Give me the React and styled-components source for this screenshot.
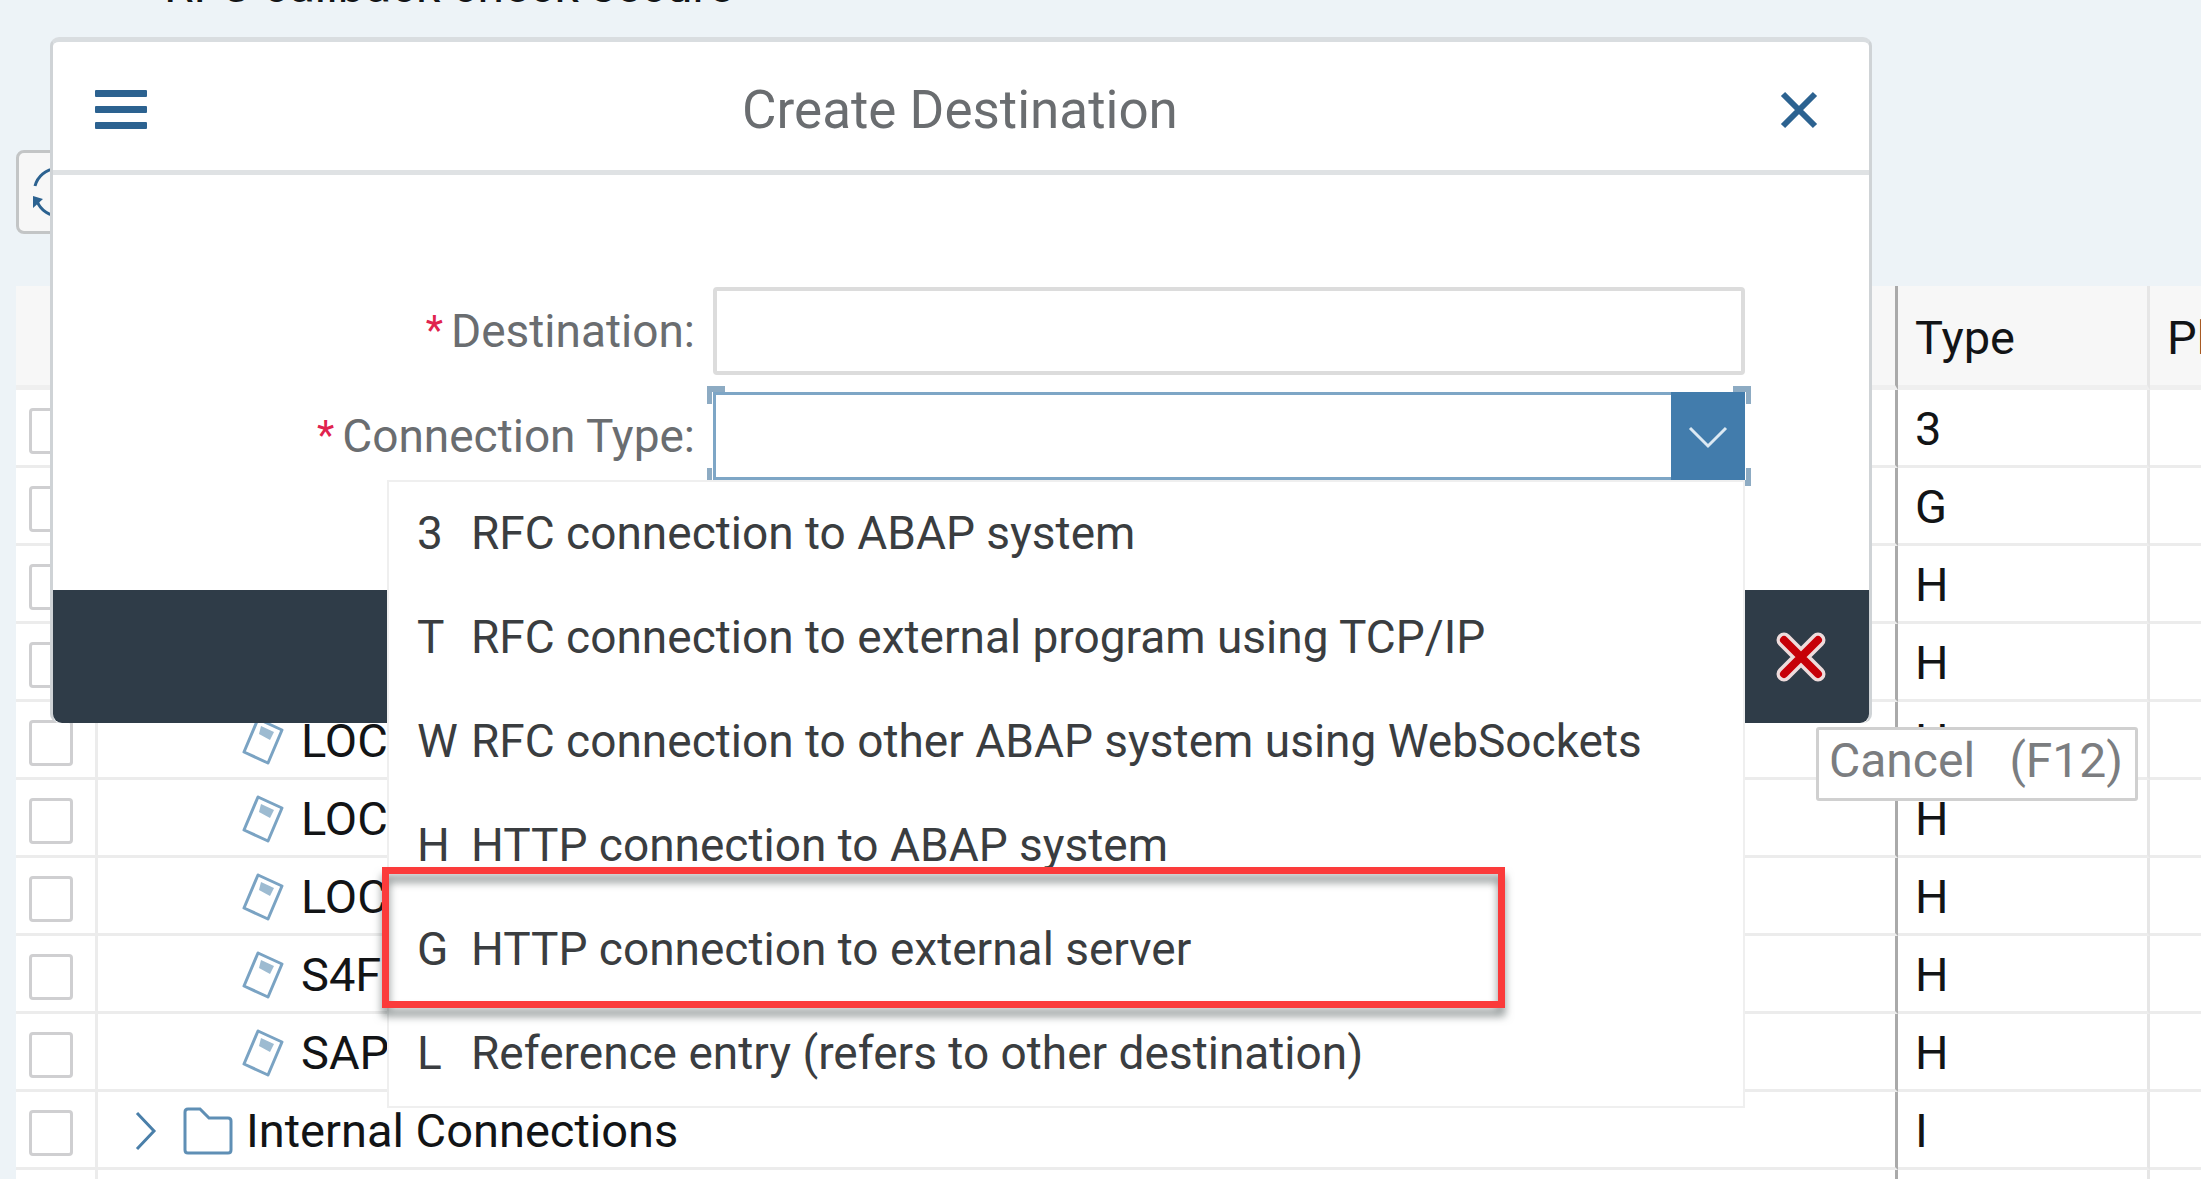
import React from "react";
import styled, { createGlobalStyle, css } from "styled-components";

const color = {
  page: "#edf3f7",
  line: "#ececec",
  header: "#f7f7f7",
  ink: "#121416",
  item: "#3a3d40",
  label: "#6a6d70",
  icon: "#2c6290",
  accent: "#427cac",
  bar: "#2f3c48",
};

const GlobalStyle = createGlobalStyle`
  *, *::before, *::after { box-sizing: border-box; }
  body { margin: 0; background: ${color.page}; }
  body, button, input, select {
    font-family: Roboto, "Liberation Sans", sans-serif;
    font-size: 46px;
    line-height: 56px;
    color: ${color.ink};
  }
`;

const Page = styled.div`
  position: relative;
  display: flex;
  flex-direction: column;
  height: 100vh;
  overflow: hidden;
  padding-left: 16px;
`;

const Status = styled.p`
  flex: none;
  margin: -42px 0 0;
  padding-left: 148px;
  font-size: 48px;
`;

const Toolbar = styled.div`
  flex: none;
  display: flex;
  padding: 136px 0 50px;
`;

const ToolButton = styled.button`
  display: flex;
  align-items: center;
  width: 88px;
  height: 84px;
  padding: 0 12px;
  margin-bottom: 2px;
  background: ${color.header};
  border: 3px solid #c3c5c6;
  border-radius: 8px;
`;

const Grid = styled.table`
  flex: none;
  width: 100%;
  table-layout: fixed;
  border-collapse: separate;
  border-spacing: 0;
  font-size: 47px;
  background: #fff;
`;

const HeadCell = styled.th`
  height: 104px;
  padding: 4px 17px 0;
  text-align: left;
  font-weight: 400;
  white-space: nowrap;
  background: ${color.header};
  border-bottom: 5px solid #efefef;
  border-right: ${(p) => (p.$edge ? `3px solid ${p.$edge}` : "0")};
`;

const Cell = styled.td`
  height: 78px;
  padding: 3px 17px 0;
  white-space: nowrap;
  border-bottom: 3px solid ${color.line};
  border-right: ${(p) => (p.$edge ? `3px solid ${p.$edge}` : "0")};
`;

const Tick = styled.input`
  display: block;
  appearance: none;
  width: 44px;
  height: 46px;
  margin: 4px 0 0 -4px;
  background: #fff;
  border: 3px solid #cfcfd1;
  border-radius: 4px;
`;

const Node = styled.div`
  display: flex;
  align-items: center;
  padding-left: ${(p) => (p.$leaf ? 126 : 20)}px;
  gap: ${(p) => (p.$leaf ? 16 : 13)}px;

  svg { flex: none; }
`;

const NodeIcons = styled.span`
  display: flex;
  align-items: center;
  gap: 26px;
`;

const Dialog = styled.section`
  position: absolute;
  top: 37px;
  left: 50px;
  right: 329px;
  display: flex;
  flex-direction: column;
  background: #fff;
  border: 3px solid #cfd3d6;
  border-top: 5px solid #d9dde0;
  border-bottom: 0;
  border-radius: 9px;
`;

const TitleBar = styled.header`
  display: flex;
  align-items: center;
  justify-content: space-between;
  height: 133px;
  padding: 8px 42px 0 40px;
  border-bottom: 5px solid #dfe2e4;
`;

const Title = styled.h1`
  margin: 0;
  font-size: 53px;
  font-weight: 400;
  color: ${color.label};
`;

const PlainButton = styled.button`
  display: flex;
  align-items: center;
  justify-content: center;
  width: 56px;
  height: 64px;
  padding: 0;
  background: none;
  border: 0;
`;

const Form = styled.form`
  display: grid;
  grid-template-columns: 642px 1fr;
  column-gap: 18px;
  row-gap: 17px;
  padding: 112px 124px 110px 0;
`;

const Label = styled.label`
  display: flex;
  align-items: center;
  justify-content: flex-end;
  gap: 8px;
  color: ${color.label};
`;

const Required = styled.span`
  font-size: 40px;
  color: #e0234e;
`;

const box = css`
  display: block;
  width: 100%;
  height: 88px;
  padding: 0 16px;
  background: #fff;
`;

const TextBox = styled.input`
  ${box}
  border: 4px solid #dcdcdc;
  border-radius: 4px;
`;

const SelectWrap = styled.div`
  position: relative;
`;

const SelectBox = styled.select`
  ${box}
  appearance: none;
  border: 3px solid #7ea6c6;
  border-radius: 0;
`;

const Arrow = styled.span`
  position: absolute;
  top: 0;
  right: 0;
  bottom: 0;
  display: flex;
  align-items: center;
  justify-content: center;
  width: 74px;
  padding-top: 4px;
  background: ${color.accent};
  pointer-events: none;
`;

const Corner = styled.span`
  position: absolute;
  width: 18px;
  height: 18px;
  border: 0 solid #8dabc3;
  ${(p) => p.$v}: -6px;
  ${(p) => p.$h}: -6px;
  border-${(p) => p.$v}-width: 6px;
  border-${(p) => p.$h}-width: 5px;
`;

const Footer = styled.footer`
  display: flex;
  align-items: center;
  justify-content: flex-end;
  height: 133px;
  padding: 0 40px;
  background: ${color.bar};
  border-radius: 0 0 9px 9px;
`;

const Menu = styled.ul`
  position: absolute;
  top: 480px;
  left: 387px;
  right: 456px;
  margin: 0;
  padding: 0;
  list-style: none;
  background: #fff;
  border: 2px solid #efefef;
`;

const MenuItem = styled.li`
  display: grid;
  grid-template-columns: 54px 1fr;
  align-items: center;
  height: 104px;
  padding: 0 0 2px 28px;
  color: ${color.item};
  white-space: nowrap;
`;

const Highlight = styled.div`
  position: absolute;
  top: 867px;
  left: 382px;
  width: 1123px;
  height: 141px;
  border: 7px solid #fb3b3b;
  filter: drop-shadow(0 8px 4px rgba(40, 52, 52, 0.55));
  pointer-events: none;
`;

const Tooltip = styled.div`
  position: absolute;
  top: 727px;
  right: 63px;
  display: flex;
  justify-content: space-between;
  width: 322px;
  padding: 3px 12px 9px 10px;
  font-size: 48px;
  color: #7b7d80;
  background: #fff;
  border: 3px solid #d0d0d0;
  border-radius: 3px;
`;

const DocIcon = () => (
  <svg width="44" height="50" viewBox="0 0 44 50" fill="none" stroke="#7aa3c3" strokeWidth="3">
    <path d="M17 3 41 14 27 47 3 36Z" strokeLinejoin="round" />
    <path d="M20 10 33 16 29 24 18 18Z" fill="#9dbbd1" stroke="none" />
  </svg>
);

const FolderIcon = () => (
  <svg width="50" height="48" viewBox="0 0 50 48" fill="none" stroke="#5f8fb5" strokeWidth="3">
    <path d="M2 5Q2 2 5 2H17L26 11H45Q48 11 48 14V43Q48 46 45 46H5Q2 46 2 43Z" />
  </svg>
);

const ChevronRight = () => (
  <svg width="22" height="40" viewBox="0 0 22 40" fill="none" stroke="#4a7fa9" strokeWidth="3">
    <path d="M2 2 19 20 2 38" />
  </svg>
);

const RefreshIcon = () => (
  <svg width="54" height="54" viewBox="0 0 54 54" fill="none" stroke={color.icon} strokeWidth="3">
    <path d="M4 21A23 23 0 0 1 48 19 M50 33A23 23 0 0 1 6 36" />
    <path d="M2 31V43L12 34Z M52 23V11L42 20Z" fill={color.icon} stroke="none" />
  </svg>
);

const MenuIcon = () => (
  <svg width="52" height="40" viewBox="0 0 52 40" fill={color.icon}>
    <rect width="52" height="7" rx="1" y="0" />
    <rect width="52" height="7" rx="1" y="16" />
    <rect width="52" height="7" rx="1" y="32" />
  </svg>
);

const CloseIcon = () => (
  <svg width="38" height="38" viewBox="0 0 38 38" fill="none" stroke={color.icon} strokeWidth="6">
    <path d="M3 3 35 35M35 3 3 35" />
  </svg>
);

const CancelIcon = () => (
  <svg width="50" height="50" viewBox="0 0 50 50" fill="none" strokeLinecap="round">
    <path d="M8 8 42 42M42 8 8 42" stroke="#eedcdc" strokeWidth="15" />
    <path d="M8 8 42 42M42 8 8 42" stroke="#c60008" strokeWidth="8" />
  </svg>
);

const ArrowIcon = () => (
  <svg width="40" height="24" viewBox="0 0 40 24" fill="none" stroke="#dce9f3" strokeWidth="3">
    <path d="M2 2 20 20 38 2" />
  </svg>
);

const rows = [
  { type: "3" },
  { type: "G" },
  { type: "H" },
  { type: "H" },
  { name: "LOC", type: "H" },
  { name: "LOC", type: "H" },
  { name: "LOC", type: "H" },
  { name: "S4F", type: "H" },
  { name: "SAP", type: "H" },
  { name: "Internal Connections", type: "I", folder: true },
  { type: "" },
];

const connectionTypes = [
  ["3", "RFC connection to ABAP system"],
  ["T", "RFC connection to external program using TCP/IP"],
  ["W", "RFC connection to other ABAP system using WebSockets"],
  ["H", "HTTP connection to ABAP system"],
  ["G", "HTTP connection to external server"],
  ["L", "Reference entry (refers to other destination)"],
];

function ConnectionTable() {
  return (
    <Grid>
      <colgroup>
        <col style={{ width: 82 }} />
        <col />
        <col style={{ width: 252 }} />
        <col style={{ width: 51 }} />
      </colgroup>
      <thead>
        <tr>
          <HeadCell $edge={color.line} />
          <HeadCell $edge="#aaaaaa" />
          <HeadCell $edge="#e6e6e6">Type</HeadCell>
          <HeadCell>Pl</HeadCell>
        </tr>
      </thead>
      <tbody>
        {rows.map((row, i) => (
          <tr key={i}>
            <Cell $edge={color.line}>
              <Tick type="checkbox" aria-label={`Select row ${i + 1}`} />
            </Cell>
            <Cell $edge="#aaaaaa">
              {row.name && (
                <Node $leaf={!row.folder}>
                  {row.folder ? (
                    <NodeIcons>
                      <ChevronRight />
                      <FolderIcon />
                    </NodeIcons>
                  ) : (
                    <DocIcon />
                  )}
                  {row.name}
                </Node>
              )}
            </Cell>
            <Cell $edge="#e6e6e6">{row.type}</Cell>
            <Cell />
          </tr>
        ))}
      </tbody>
    </Grid>
  );
}

function CreateDestination() {
  return (
    <Dialog role="dialog" aria-labelledby="dialog-title">
      <TitleBar>
        <PlainButton aria-label="Menu">
          <MenuIcon />
        </PlainButton>
        <Title id="dialog-title">Create Destination</Title>
        <PlainButton aria-label="Close">
          <CloseIcon />
        </PlainButton>
      </TitleBar>
      <Form>
        <Label htmlFor="destination">
          <Required>*</Required>Destination:
        </Label>
        <TextBox id="destination" type="text" />
        <Label htmlFor="connection-type">
          <Required>*</Required>Connection Type:
        </Label>
        <SelectWrap>
          <SelectBox id="connection-type" defaultValue="">
            <option value="" />
            {connectionTypes.map(([code, text]) => (
              <option key={code} value={code}>
                {text}
              </option>
            ))}
          </SelectBox>
          <Arrow>
            <ArrowIcon />
          </Arrow>
          <Corner $v="top" $h="left" />
          <Corner $v="top" $h="right" />
          <Corner $v="bottom" $h="left" />
          <Corner $v="bottom" $h="right" />
        </SelectWrap>
      </Form>
      <Footer>
        <PlainButton aria-label="Cancel">
          <CancelIcon />
        </PlainButton>
      </Footer>
    </Dialog>
  );
}

export default function App() {
  return (
    <>
      <GlobalStyle />
      <Page>
        <Status>RFC callback check secure</Status>
        <Toolbar>
          <ToolButton aria-label="Refresh">
            <RefreshIcon />
          </ToolButton>
        </Toolbar>
        <ConnectionTable />
        <CreateDestination />
        <Menu>
          {connectionTypes.map(([code, text]) => (
            <MenuItem key={code}>
              <span>{code}</span>
              <span>{text}</span>
            </MenuItem>
          ))}
        </Menu>
        <Highlight />
        <Tooltip role="tooltip">
          <span>Cancel</span>
          <span>(F12)</span>
        </Tooltip>
      </Page>
    </>
  );
}
